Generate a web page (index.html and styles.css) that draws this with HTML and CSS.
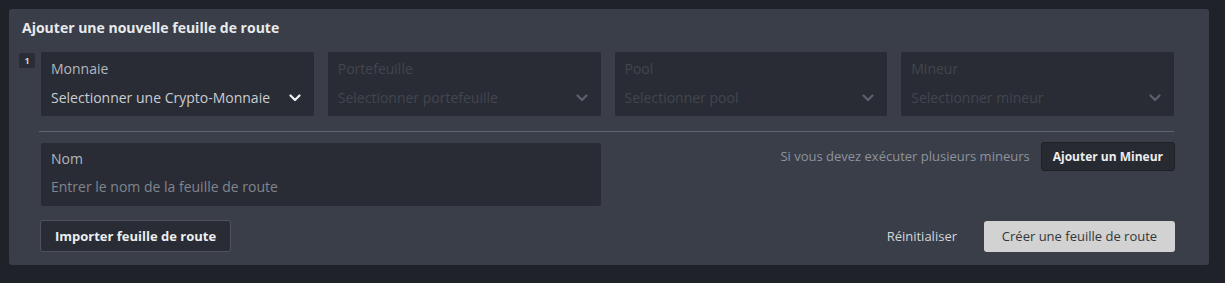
FILE: index.html
```html
<!DOCTYPE html>
<html lang="fr">

<head>
    <meta charset="UTF-8">
    <meta name="viewport" content="width=device-width, initial-scale=1.0">
    <title>Feuille de route</title>
    <link rel="stylesheet" href="styles.css">
</head>

<body>
    <!-- carte : nouvelle feuille de route -->
    <div class="card">
        <h3 class="card-title">Ajouter une nouvelle feuille de route</h3>

        <!-- ligne 1 : monnaie / portefeuille / pool / mineur -->
        <div class="miner-row">
            <span class="badge">1</span>
            <div class="fields">
                <div class="field">
                    <div class="field-label">Monnaie</div>
                    <div class="field-value">
                        <span>Selectionner une Crypto-Monnaie</span>
                        <svg class="chevron" width="12" height="8" viewBox="0 0 12 8"><polyline points="1.5,1.5 6,6 10.5,1.5" /></svg>
                    </div>
                </div>
                <div class="field disabled">
                    <div class="field-label">Portefeuille</div>
                    <div class="field-value">
                        <span>Selectionner portefeuille</span>
                        <svg class="chevron" width="12" height="8" viewBox="0 0 12 8"><polyline points="1.5,1.5 6,6 10.5,1.5" /></svg>
                    </div>
                </div>
                <div class="field disabled">
                    <div class="field-label">Pool</div>
                    <div class="field-value">
                        <span>Selectionner pool</span>
                        <svg class="chevron" width="12" height="8" viewBox="0 0 12 8"><polyline points="1.5,1.5 6,6 10.5,1.5" /></svg>
                    </div>
                </div>
                <div class="field disabled">
                    <div class="field-label">Mineur</div>
                    <div class="field-value">
                        <span>Selectionner mineur</span>
                        <svg class="chevron" width="12" height="8" viewBox="0 0 12 8"><polyline points="1.5,1.5 6,6 10.5,1.5" /></svg>
                    </div>
                </div>
            </div>
        </div>

        <div class="body">
            <hr class="divider">

            <!-- nom + ajout mineur -->
            <div class="name-row">
                <div class="field">
                    <div class="field-label">Nom</div>
                    <div class="field-value placeholder">Entrer le nom de la feuille de route</div>
                </div>
                <div class="add-miner">
                    <span class="hint">Si vous devez exécuter plusieurs mineurs</span>
                    <a href="javascript:;" class="btn btn-dark">Ajouter un Mineur</a>
                </div>
            </div>

            <!-- actions -->
            <div class="actions">
                <a href="javascript:;" class="btn btn-outline">Importer feuille de route</a>
                <div class="actions-right">
                    <a href="javascript:;" class="btn btn-link">Réinitialiser</a>
                    <a href="javascript:;" class="btn btn-light">Créer une feuille de route</a>
                </div>
            </div>
        </div>
    </div>
</body>

</html>
```

FILE: styles.css
```css
* {
    padding: 0;
    margin: 0;
    box-sizing: border-box;
}

a {
    text-decoration: none;
}

body {
    background-color: #1f2229;
    font-family: "Open Sans", "Liberation Sans", sans-serif;
    padding: 9px 16px 0 9px;
}

.card {
    width: 1200px;
    background-color: #393e49;
    border-radius: 3px;
    padding: 9px 35px 13px 10px;
}

.card-title {
    font-size: 14px;
    line-height: 20px;
    font-weight: 700;
    color: #e9eaec;
    padding-left: 3px;
}

.miner-row {
    display: flex;
    align-items: flex-start;
    margin-top: 14px;
}

.badge {
    width: 16px;
    height: 15px;
    margin: 1px 6px 0 0;
    background-color: #2a2d35;
    border-radius: 2px;
    color: #cfd2d6;
    font-size: 9px;
    font-weight: 700;
    line-height: 15px;
    text-align: center;
}

.fields {
    flex: 1;
    display: grid;
    grid-template-columns: repeat(4, 1fr);
    gap: 14px;
}

.field {
    background-color: #292c34;
    border-radius: 2px;
    height: 64px;
    padding: 7px 13px 0 10px;
}

.field-label {
    font-size: 14px;
    line-height: 20px;
    color: #b3b7bf;
}

.field-value {
    display: flex;
    align-items: center;
    justify-content: space-between;
    margin-top: 9px;
    font-size: 14px;
    line-height: 20px;
    color: #c9ccd2;
}

.chevron {
    fill: none;
    stroke: #eef0f2;
    stroke-width: 2.2;
    stroke-linecap: round;
    stroke-linejoin: round;
}

.disabled .field-label,
.disabled .field-value {
    color: #41464f;
}

.disabled .chevron {
    stroke: #5b606a;
}

.body {
    padding-left: 20px;
}

.divider {
    border: none;
    border-top: 1px solid #5f6572;
    margin-top: 15px;
}

.name-row {
    display: grid;
    grid-template-columns: 1fr 1fr;
    gap: 14px;
    margin: 11px 0 0 2px;
}

.name-row .field {
    height: 63px;
    padding-top: 6px;
}

.name-row .field-value {
    margin-top: 8px;
}

.placeholder {
    color: #80858f;
}

.add-miner {
    display: flex;
    align-items: flex-start;
    justify-content: flex-end;
    gap: 11px;
    margin-top: -1px;
    margin-right: -1px;
}

.hint {
    font-size: 13px;
    line-height: 29px;
    color: #8e939c;
}

.btn {
    display: inline-block;
    font-size: 13px;
    border-radius: 3px;
}

.btn-dark {
    height: 29px;
    line-height: 27px;
    padding: 0 11px;
    background-color: #272a31;
    border: 1px solid #1e2025;
    color: #eceef0;
    font-size: 12px;
    font-weight: 700;
}

.actions {
    display: flex;
    align-items: center;
    justify-content: space-between;
    margin: 14px -1px 0 1px;
}

.btn-outline {
    width: 191px;
    height: 32px;
    line-height: 30px;
    text-align: center;
    background-color: #292c34;
    border: 1px solid #4d525d;
    color: #eceef0;
    font-weight: 700;
}

.actions-right {
    display: flex;
    align-items: center;
    gap: 12px;
}

.btn-link {
    padding: 0 15px;
    line-height: 31px;
    color: #d3d6da;
}

.btn-light {
    width: 191px;
    height: 31px;
    line-height: 31px;
    text-align: center;
    background-color: #d2d2d2;
    color: #33363c;
}
```
